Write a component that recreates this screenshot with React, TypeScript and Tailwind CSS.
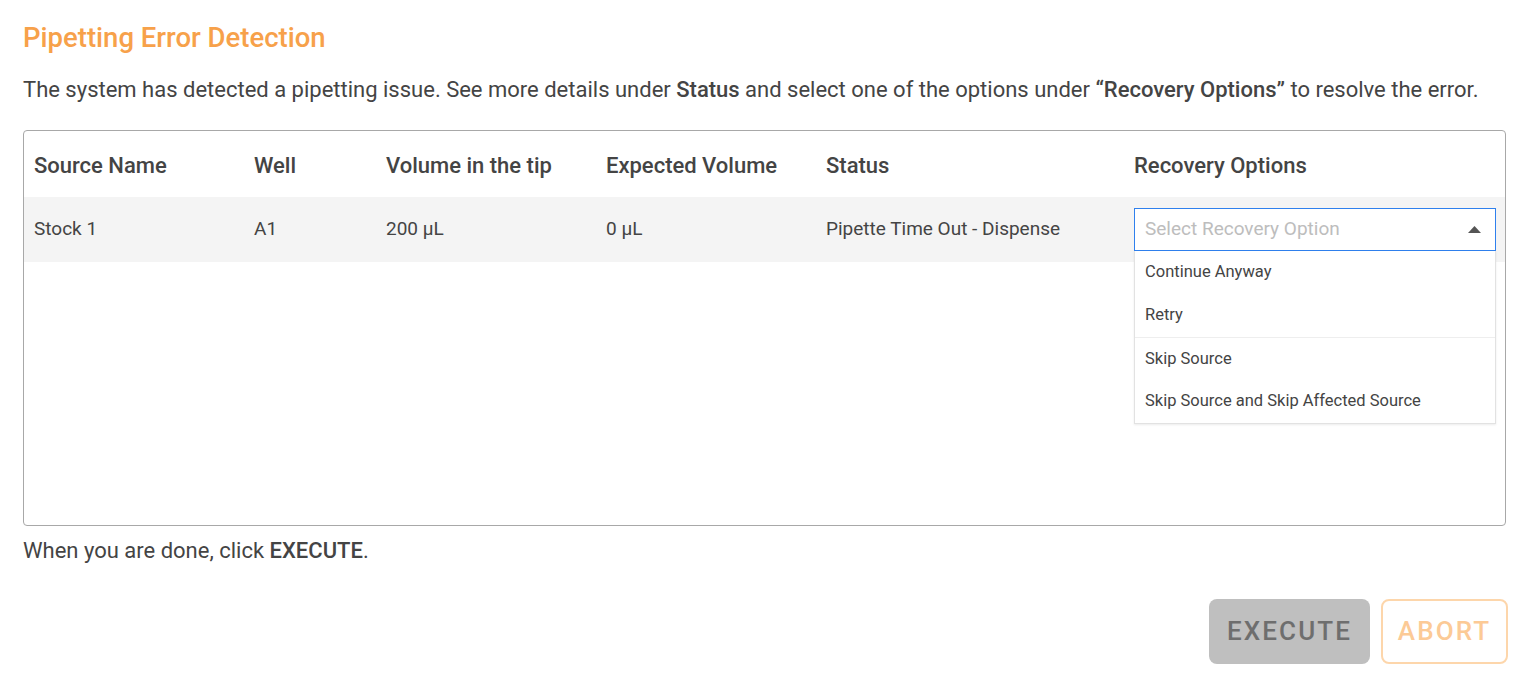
import { useState } from "react";

const columns = [
  "Source Name",
  "Well",
  "Volume in the tip",
  "Expected Volume",
  "Status",
  "Recovery Options",
];

const recoveryOptions = [
  "Continue Anyway",
  "Retry",
  "Skip Source",
  "Skip Source and Skip Affected Source",
];

function RecoverySelect() {
  const [open, setOpen] = useState(true);
  const [value, setValue] = useState<string | null>(null);

  return (
    <div className="relative w-full">
      <button
        onClick={() => setOpen((o) => !o)}
        className="flex h-[43px] w-full items-center justify-between border border-[#2f80ed] bg-white pl-[10px] pr-[14px] text-left text-[19px]"
      >
        <span className={value ? "text-[#444]" : "text-[#bdbdbd]"}>
          {value ?? "Select Recovery Option"}
        </span>
        <svg width="13" height="7" viewBox="0 0 13 7" className={open ? "" : "rotate-180"}>
          <path d="M0 7 L6.5 0 L13 7 Z" fill="#555" />
        </svg>
      </button>
      {open && (
        <ul className="absolute left-0 top-full z-10 w-full border border-t-0 border-[#e2e2e2] bg-white shadow-[0_1px_2px_rgba(0,0,0,0.08)]">
          {recoveryOptions.map((opt, i) => (
            <li
              key={opt}
              onClick={() => {
                setValue(opt);
                setOpen(false);
              }}
              className={
                "flex h-[43px] cursor-pointer items-center px-[10px] text-[16.5px] text-[#444] hover:bg-[#f5f5f5]" +
                (i === 2 ? " border-t border-[#eeeeee]" : "")
              }
            >
              {opt}
            </li>
          ))}
        </ul>
      )}
    </div>
  );
}

export default function App() {
  return (
    <div className="min-h-screen bg-white px-[23px] pt-[21px] font-['Roboto',_'Liberation_Sans',_sans-serif] text-[#444]">
      <h1 className="text-[27.5px] font-medium leading-[34px] text-[#f7a14a]">
        Pipetting Error Detection
      </h1>
      <p className="mt-[20px] text-[22px] leading-[30px]">
        The system has detected a pipetting issue. See more details under{" "}
        <b className="font-medium">Status</b> and select one of the options under{" "}
        <b className="font-medium">“Recovery Options”</b> to resolve the error.
      </p>

      <div className="mt-[25px] h-[396px] rounded-[4px] border border-[#a8a8a8]">
        <div className="grid h-[66px] grid-cols-[220px_132px_220px_220px_308px_1fr] items-center pl-[10px] pt-[3px] text-[22px] font-medium">
          {columns.map((c) => (
            <div key={c}>{c}</div>
          ))}
        </div>
        <div className="grid h-[65px] grid-cols-[220px_132px_220px_220px_308px_1fr] items-center bg-[#f4f4f4] pl-[10px] pr-[9px] text-[19px]">
          <div>Stock 1</div>
          <div>A1</div>
          <div>200 µL</div>
          <div>0 µL</div>
          <div>Pipette Time Out - Dispense</div>
          <div>
            <RecoverySelect />
          </div>
        </div>
      </div>

      <p className="mt-[10px] text-[22px] leading-[30px]">
        When you are done, click <b className="font-medium">EXECUTE</b>.
      </p>

      <div className="mt-[33px] flex justify-end gap-[11px]">
        <button
          disabled
          className="h-[65px] w-[161px] rounded-[8px] bg-[#bfbfbf] text-[26px] font-medium tracking-[0.08em] text-[#6e6e6e]"
        >
          EXECUTE
        </button>
        <button className="-mr-[2px] h-[65px] w-[127px] rounded-[8px] border-2 border-[#fdd6ab] text-[26px] font-medium tracking-[0.08em] text-[#fcca96]">
          ABORT
        </button>
      </div>
    </div>
  );
}
